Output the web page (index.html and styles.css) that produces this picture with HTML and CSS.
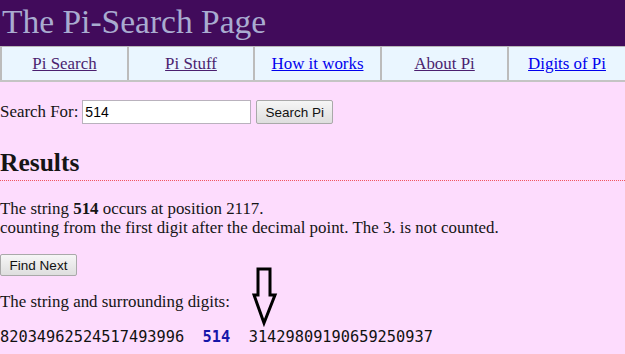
FILE: index.html
```html
<!DOCTYPE html>
<html lang="en">
<head>
  <meta charset="UTF-8" />
  <title>The Pi-Search Page</title>
  <link rel="stylesheet" href="styles.css">
</head>
<body>
  <!-- Title banner -->
  <div class="banner">
    <h1>The Pi-Search Page</h1>
  </div>

  <!-- Top menu -->
  <div class="menu">
    <div class="menu-cell"><a href="#" class="seen">Pi Search</a></div>
    <div class="menu-cell"><a href="#" class="seen">Pi Stuff</a></div>
    <div class="menu-cell"><a href="#">How it works</a></div>
    <div class="menu-cell"><a href="#" class="seen">About Pi</a></div>
    <div class="menu-cell"><a href="#">Digits of Pi</a></div>
  </div>

  <form class="search">
    <label for="q">Search For:</label>
    <input type="text" id="q" value="514" />
    <button type="button" class="btn search-btn">Search Pi</button>
  </form>

  <h2 class="results-title">Results</h2>

  <p class="found">
    The string <b>514</b> occurs at position 2117.<br>
    counting from the first digit after the decimal point. The 3. is not counted.
  </p>

  <button type="button" class="btn next-btn">Find Next</button>

  <div class="around">
    <p>The string and surrounding digits:</p>
    <pre class="digits">82034962524517493996  <span class="hit">514</span>  31429809190659250937</pre>

    <!-- pointer arrow over the hit -->
    <svg class="pointer" width="30" height="62" viewBox="0 0 30 62">
      <polygon points="6,2 18,2 18,28 23,28 12,56 2,28 6,28"
               fill="none" stroke="#000" stroke-width="3" stroke-linejoin="miter" />
    </svg>
  </div>
</body>
</html>
```

FILE: styles.css
```css
body {
  margin: 0;
  background: #fddcfd;
  font-family: "Liberation Serif", "Times New Roman", serif;
  font-size: 16.9px;
  color: #151515;
}
.banner {
  background: #410b5b;
  height: 46px;
}
.banner h1 {
  margin: 0;
  padding-left: 2px;
  font-weight: normal;
  font-size: 33.5px;
  line-height: 44px;
  color: #a9acd0;
}
.menu {
  display: grid;
  grid-template-columns: 127px 126px 127px 127px 1fr;
  background: #eaf6ff;
  border-top: 1px solid #b8b8b8;
  border-bottom: 2px solid #c4c4c4;
  height: 33px;
}
.menu-cell {
  border-left: 2px solid #bcbcbc;
  text-align: center;
  line-height: 33px;
}
.menu-cell a { color: #0000ee; }
.menu-cell a.seen { color: #4b1f6f; }

.search {
  margin: 18px 0 0 0;
  display: flex;
  align-items: center;
  height: 24px;
}
.search label { margin-right: 4px; }
.search input {
  width: 163px;
  height: 20px;
  padding: 1px 2px;
  border: 1px solid #b9b2bd;
  font-family: "Liberation Sans", Arial, sans-serif;
  font-size: 14px;
  margin: 0 5px 0 0;
}
.btn {
  font-family: "Liberation Sans", Arial, sans-serif;
  font-size: 13.5px;
  color: #111;
  background: linear-gradient(#f6f6f6, #dedede);
  border: 1px solid #a9a9a9;
  border-radius: 2px;
  padding: 0 6px;
}
.search-btn { height: 24px; width: 77px; }

.results-title {
  margin: 24px 0 0 0;
  font-size: 25.5px;
  line-height: 30px;
  padding-bottom: 2px;
  border-bottom: 1px dotted #f0555f;
}
.found {
  margin: 18px 0 0 0;
  line-height: 19px;
}
.next-btn {
  display: block;
  margin-top: 17px;
  height: 22px;
  width: 77px;
}
.around {
  position: relative;
  margin-top: 16px;
}
.around p { margin: 0; line-height: 19px; }
.digits {
  margin: 17px 0 0 0;
  font-family: "DejaVu Sans Mono", "Liberation Mono", monospace;
  font-size: 15.3px;
  line-height: 18px;
  color: #111;
}
.hit { color: #1616a8; font-weight: bold; }
.pointer {
  position: absolute;
  left: 252px;
  top: -25px;
}
```
